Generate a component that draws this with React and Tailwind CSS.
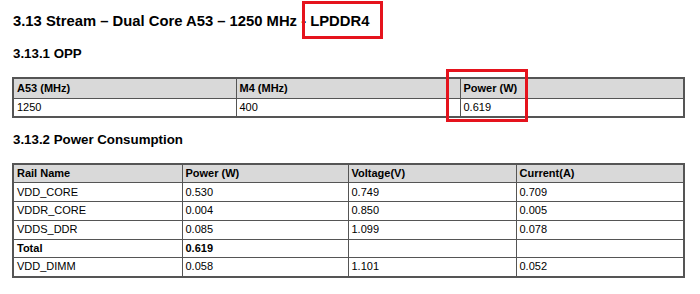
import React from 'react';

const opp = { head: ['A53 (MHz)', 'M4 (MHz)', 'Power (W)'], row: ['1250', '400', '0.619'] };

const rails = [
  ['VDD_CORE', '0.530', '0.749', '0.709'],
  ['VDDR_CORE', '0.004', '0.850', '0.005'],
  ['VDDS_DDR', '0.085', '1.099', '0.078'],
  ['Total', '0.619', '', '', true],
  ['VDD_DIMM', '0.058', '1.101', '0.052'],
];

function Cell({ children, head, bold, tall }) {
  const base = 'border border-[#555] px-[3px] py-0 text-left align-middle leading-none';
  if (head) {
    return <th className={`${base} bg-[#d9d9d9] font-bold ${tall ? 'h-[20px]' : 'h-[19px]'}`}>{children}</th>;
  }
  return <td className={`${base} h-[18.75px] ${bold ? 'font-bold' : 'font-normal'}`}>{children}</td>;
}

export default function App() {
  return (
    <div className="relative w-[700px] h-[294px] bg-white text-black overflow-hidden font-['Liberation_Sans',Arial,sans-serif]">
      {/* highlight boxes */}
      <div className="absolute left-[302px] top-[1px] w-[81px] h-[38px] border-[3px] border-[#e5131d]" />
      <div className="absolute left-[446px] top-[69px] w-[82px] h-[53px] border-[3px] border-[#e5131d]" />

      <div className="pl-[13px] pr-[17px]">
        <h1 className="text-[14.8px] font-bold leading-none pt-[14px] h-[47px]">
          3.13 Stream – Dual Core A53 – 1250 MHz - LPDDR4
        </h1>
        <h2 className="text-[13.3px] font-bold leading-none h-[30px]">3.13.1 OPP</h2>

        <table className="table-fixed border-collapse w-[671px] -ml-[1px] text-[11px] border-2 border-[#555]">
          <colgroup>
            <col className="w-[223px]" />
            <col className="w-[224px]" />
            <col className="w-[224px]" />
          </colgroup>
          <thead>
            <tr>{opp.head.map(h => <Cell key={h} head tall>{h}</Cell>)}</tr>
          </thead>
          <tbody>
            <tr>{opp.row.map((v, i) => <Cell key={i}>{v}</Cell>)}</tr>
          </tbody>
        </table>

        <h2 className="text-[13.3px] font-bold leading-none mt-[15px] h-[30px]">3.13.2 Power Consumption</h2>

        <table className="table-fixed border-collapse w-[671px] -ml-[1px] text-[11px] border-2 border-[#555]">
          <colgroup>
            <col className="w-[169px]" />
            <col className="w-[166px]" />
            <col className="w-[168px]" />
            <col className="w-[168px]" />
          </colgroup>
          <thead>
            <tr>
              {['Rail Name', 'Power (W)', 'Voltage(V)', 'Current(A)'].map(h => <Cell key={h} head>{h}</Cell>)}
            </tr>
          </thead>
          <tbody>
            {rails.map(r => (
              <tr key={r[0]}>
                <Cell bold={r[4]}>{r[0]}</Cell>
                <Cell bold={r[4]}>{r[1]}</Cell>
                <Cell>{r[2]}</Cell>
                <Cell>{r[3]}</Cell>
              </tr>
            ))}
          </tbody>
        </table>
      </div>
    </div>
  );
}
